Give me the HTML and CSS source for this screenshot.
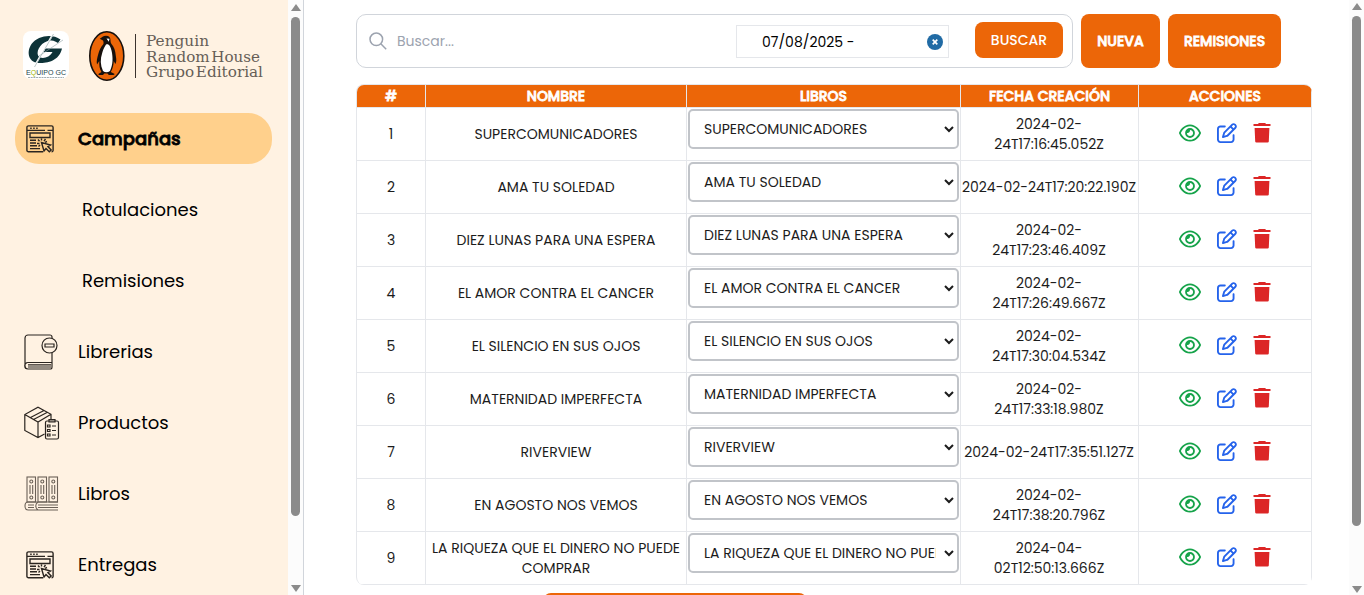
FILE: index.html
```html
<!DOCTYPE html>
<html lang="es">
<head>
<meta charset="utf-8">
<title>Campañas</title>
<link rel="stylesheet" href="styles.css">
</head>
<body>
<svg class="defs" aria-hidden="true">
  <symbol id="eye" viewBox="0 0 576 512"><path fill="currentColor" d="M288 80c-65.2 0-118.8 29.6-159.9 67.7C89.6 183.5 63 226 49.4 256c13.6 30 40.2 72.5 78.6 108.3C169.2 402.4 222.8 432 288 432s118.8-29.6 159.9-67.7C486.4 328.5 513 286 526.6 256c-13.6-30-40.2-72.5-78.6-108.3C406.8 109.6 353.2 80 288 80zM95.4 112.6C142.5 68.8 207.2 32 288 32s145.5 36.8 192.6 80.6c46.8 43.5 78.1 95.4 93 131.1c3.3 7.9 3.3 16.7 0 24.6c-14.9 35.7-46.2 87.7-93 131.1C433.5 443.2 368.8 480 288 480s-145.5-36.8-192.6-80.6C48.6 356 17.3 304 2.5 268.3c-3.3-7.9-3.3-16.7 0-24.6C17.3 208 48.6 156 95.4 112.6zM288 336c44.2 0 80-35.8 80-80s-35.8-80-80-80c-.7 0-1.3 0-2 0c1.3 5.1 2 10.5 2 16c0 35.3-28.7 64-64 64c-5.5 0-10.9-.7-16-2c0 .7 0 1.3 0 2c0 44.2 35.8 80 80 80zm0-208a128 128 0 1 1 0 256 128 128 0 1 1 0-256z"/></symbol>
  <symbol id="edit" viewBox="0 0 512 512"><path fill="currentColor" d="M441 58.9L453.1 71c9.4 9.4 9.4 24.6 0 33.9L424 134.1 377.9 88 407 58.9c9.4-9.4 24.6-9.4 33.9 0zM209.8 256.2L344 121.9 390.1 168 255.8 302.2c-2.9 2.9-6.5 5-10.4 6.1l-58.5 16.7 16.7-58.5c1.1-3.9 3.2-7.5 6.1-10.4zM373.1 25L175.8 222.2c-8.7 8.7-15 19.4-18.3 31.1l-28.6 100c-2.4 8.4-.1 17.4 6.1 23.6s15.2 8.5 23.6 6.1l100-28.6c11.8-3.4 22.5-9.7 31.1-18.3L487 138.9c28.1-28.1 28.1-73.7 0-101.8L474.9 25C446.8-3.1 401.2-3.1 373.1 25zM88 64C39.4 64 0 103.4 0 152V424c0 48.6 39.4 88 88 88H360c48.6 0 88-39.4 88-88V312c0-13.3-10.7-24-24-24s-24 10.7-24 24V424c0 22.1-17.9 40-40 40H88c-22.1 0-40-17.9-40-40V152c0-22.1 17.9-40 40-40H200c13.3 0 24-10.7 24-24s-10.7-24-24-24H88z"/></symbol>
  <symbol id="trash" viewBox="0 0 18 20"><path fill="currentColor" d="M5.8 0h6.400l.8 1H17.500v2H.5V1H5zM1.600 5h14.800l-.6 13.400a1.200 1.200 0 0 1-1.200 1.100H3.400a1.200 1.200 0 0 1-1.200-1.100z"/></symbol>
  <symbol id="campaign" viewBox="0 0 28 28"><g fill="none" stroke="currentColor" stroke-width="1.4"><path d="M17 26.800H2.500a1.600 1.600 0 0 1-1.600-1.600V2.500A1.600 1.600 0 0 1 2.500.9h23a1.600 1.600 0 0 1 1.600 1.600v23a1.500 1.500 0 0 1-1.500 1.300M1 5.400h18M21.500 5.400H27M4.200 3.200h1.500M7.200 3.200h1.500M10.200 3.200h1.500M4 8h20v4.500H4zM4 15.300h6M4 18h6M4 20.700h7M4 23.600h10M15.500 13.500v2M12 14.500l1.500 1.700M19.500 14l-1.500 2.200M11 18.500h2.500M21 16.500l-2 .8M12.500 21.500l1.500-1.500"/><path d="m15.500 17.500 2.500 8.500 2-2.500 3.300 3.300 1.900-1.900-3.300-3.300 2.600-1.600z"/></g></symbol>
</svg>
<div class="app">
  <aside class="sidebar">
    <div class="brand">
      <svg class="gc" viewBox="0 0 46 48">
        <rect width="46" height="48" rx="8" fill="#fff"/>
        <path d="M37.500 8.500C29 2.500 15 4.500 8.500 13c-6 9-2 19 7.500 19 9 0 20-2 23-14.500H22.500l-2 3.500h9c-3 6-12 8-14.500 3.500-2-6 4-14 12-15 4-.5 6 1.500 8 2.500z" fill="#0d3338"/>
        <path d="M30 3 11 36" stroke="#fff" stroke-width="1.600"/>
        <path d="M30.500 3 11.500 36M40 9 16 25" stroke="#8fa3a4" stroke-width=".6"/>
        <text x="3" y="44" textLength="40" lengthAdjust="spacingAndGlyphs" class="gc-name">E<tspan fill="#a3b800">Q</tspan>UIPO GC</text>
        <path d="M5 46.500h36" stroke="#89979a" stroke-width=".8" stroke-dasharray="2 .7"/>
      </svg>
      <svg class="penguin" viewBox="0 0 180 52">
        <ellipse cx="17.800" cy="26" rx="17" ry="24.200" fill="#ec6608" stroke="#17100d" stroke-width="1.600"/>
        <path d="M10.800 8.800C13 7.500 14 5.800 17 5.800c3 0 4.700 2 4.500 4.700-.1 2.500 1.200 3.700 2.500 5.500 2.500 4 2.500 8 3.200 12.500.3 2.500-.1 4.500-.9 5.500-.6-1-.9-2-1.500-3-.3 4.500-1.200 8-3 11l3.500 1.800c.5.600 0 1.200-1 1.200h-4.500l-1.300-1.600h-3.200L14 45h-3.500c-1-.1-1.400-.8-.8-1.300l2.800-1.700c-2-3-2.500-7-2.200-11L8 34.500c-.8-3 .3-7 1.300-10.500 1-4 2.500-7 4.800-9.500.7-1 .6-2.500-.1-4z" fill="#17100d"/>
        <path d="M17 14.500c3-1 4.500 2 5.500 6 1.600 7 1.500 14-1.500 20.500-2.500 1.700-5 1.500-7 0-2.800-6-2.800-12-.8-18 .8-3 1.500-5 3.800-8.500zM17.500 8.500l3 .2-.7 3z" fill="#fff"/>
        <path d="M46.500 4v44" stroke="#3b332e" stroke-width="1"/>
        <g class="publisher">
          <text x="57" y="15.700" textLength="63" lengthAdjust="spacingAndGlyphs">Penguin</text>
          <text x="57" y="31.500" textLength="114" lengthAdjust="spacingAndGlyphs">Random House</text>
          <text x="57" y="47.300" textLength="117" lengthAdjust="spacingAndGlyphs">Grupo Editorial</text>
        </g>
      </svg>
    </div>
    <nav class="menu">
      <a class="item active"><svg class="ico"><use href="#campaign"/></svg><span>Campañas</span></a>
      <a class="item sub"><span>Rotulaciones</span></a>
      <a class="item sub"><span>Remisiones</span></a>
      <a class="item"><svg class="ico wide" viewBox="0 0 36 36"><g fill="none" stroke="#2b2520" stroke-width="1.200"><path d="M28 4V3a2 2 0 0 0-2-2H4a3 3 0 0 0-3 3v28a3 3 0 0 0 3 3h23.500M28 19v9.500H4A3 3 0 0 0 4 35M28 29v4a2 2 0 0 1-1 2M4 30.800h23M4 33h23"/><circle cx="25.500" cy="11.500" r="7.500"/><path d="M21 10h9v3h-9z"/></g></svg><span>Librerias</span></a>
      <a class="item"><svg class="ico wide" viewBox="0 0 36 36"><g fill="none" stroke="#2b2520" stroke-width="1.200"><path d="M20.500 29 14 32.500.8 25.500V9.500L14 2.300l13 7V14M.8 9.500 14 17l13-7.700M14 17v15.500M6.500 12.500 20 5.500M9.500 14.500l13.500-7"/><rect x="21.500" y="16" width="13" height="18" rx="1.500"/><path d="M25 14.500h6v2.500h-6zM23.500 20h2.500v2h-2.500zM23.500 24.500h2.500v2h-2.500zM23.500 29h2.500v2h-2.500zM28 21h4M28 25.500h4M28 30h4"/></g></svg><span>Productos</span></a>
      <a class="item"><svg class="ico wide" viewBox="0 0 36 36"><g fill="none" stroke="#6b6157" stroke-width="1.100"><rect x="3" y="1" width="8.500" height="25"/><rect x="14" y="1" width="8.500" height="25"/><rect x="25" y="1" width="8.500" height="25"/><circle cx="7.300" cy="5.500" r="1.500"/><circle cx="18.300" cy="5.500" r="1.500"/><circle cx="29.300" cy="5.500" r="1.500"/><circle cx="7.300" cy="21.500" r="1.500"/><circle cx="18.300" cy="21.500" r="1.500"/><circle cx="29.300" cy="21.500" r="1.500"/><path d="M6 9v9M8.700 9v9M17 9v9M19.700 9v9M28 9v9M30.700 9v9M34 26H4c-4 0-4 8 0 8h30M14 26c-3 2-3 6 0 8M4 29h6M4 31.500h6M14 29h20M14 31.500h20"/></g></svg><span>Libros</span></a>
      <a class="item"><svg class="ico"><use href="#campaign"/></svg><span>Entregas</span></a>
    </nav>
  </aside>
  <div class="scroll side-scroll"><i class="up"></i><i class="thumb"></i><i class="down"></i></div>
  <main class="main">
    <div class="toolbar">
      <div class="search">
        <svg class="lens" viewBox="0 0 18 18"><g fill="none" stroke="#9ca3af" stroke-width="1.500"><circle cx="7.300" cy="7.300" r="6.300"/><path d="m11.800 11.800 5.400 5.400"/></g></svg>
        <span class="placeholder">Buscar...</span>
        <div class="date"><span>07/08/2025 -</span><svg viewBox="0 0 16 16"><circle cx="8" cy="8" r="8" fill="#216ba5"/><path d="m5.700 5.700 4.600 4.600m0-4.600-4.600 4.600" stroke="#fff" stroke-width="1.700"/></svg></div>
        <button class="btn small">BUSCAR</button>
      </div>
      <button class="btn nueva">NUEVA</button>
      <button class="btn remisiones">REMISIONES</button>
    </div>
    <table class="grid">
      <colgroup><col class="c1"><col class="c2"><col class="c3"><col class="c4"><col class="c5"></colgroup>
      <thead><tr><th>#</th><th>NOMBRE</th><th>LIBROS</th><th>FECHA CREACIÓN</th><th>ACCIONES</th></tr></thead>
      <tbody>
        <tr><td>1</td><td>SUPERCOMUNICADORES</td><td class="pick"><select><option>SUPERCOMUNICADORES</option></select></td><td class="when">2024-02-<br>24T17:16:45.052Z</td><td><div class="acts"><svg class="eye"><use href="#eye"/></svg><svg class="edit"><use href="#edit"/></svg><svg class="trash"><use href="#trash"/></svg></div></td></tr>
        <tr><td>2</td><td>AMA TU SOLEDAD</td><td class="pick"><select><option>AMA TU SOLEDAD</option></select></td><td class="when">2024-02-24T17:20:22.190Z</td><td><div class="acts"><svg class="eye"><use href="#eye"/></svg><svg class="edit"><use href="#edit"/></svg><svg class="trash"><use href="#trash"/></svg></div></td></tr>
        <tr><td>3</td><td>DIEZ LUNAS PARA UNA ESPERA</td><td class="pick"><select><option>DIEZ LUNAS PARA UNA ESPERA</option></select></td><td class="when">2024-02-<br>24T17:23:46.409Z</td><td><div class="acts"><svg class="eye"><use href="#eye"/></svg><svg class="edit"><use href="#edit"/></svg><svg class="trash"><use href="#trash"/></svg></div></td></tr>
        <tr><td>4</td><td>EL AMOR CONTRA EL CANCER</td><td class="pick"><select><option>EL AMOR CONTRA EL CANCER</option></select></td><td class="when">2024-02-<br>24T17:26:49.667Z</td><td><div class="acts"><svg class="eye"><use href="#eye"/></svg><svg class="edit"><use href="#edit"/></svg><svg class="trash"><use href="#trash"/></svg></div></td></tr>
        <tr><td>5</td><td>EL SILENCIO EN SUS OJOS</td><td class="pick"><select><option>EL SILENCIO EN SUS OJOS</option></select></td><td class="when">2024-02-<br>24T17:30:04.534Z</td><td><div class="acts"><svg class="eye"><use href="#eye"/></svg><svg class="edit"><use href="#edit"/></svg><svg class="trash"><use href="#trash"/></svg></div></td></tr>
        <tr><td>6</td><td>MATERNIDAD IMPERFECTA</td><td class="pick"><select><option>MATERNIDAD IMPERFECTA</option></select></td><td class="when">2024-02-<br>24T17:33:18.980Z</td><td><div class="acts"><svg class="eye"><use href="#eye"/></svg><svg class="edit"><use href="#edit"/></svg><svg class="trash"><use href="#trash"/></svg></div></td></tr>
        <tr><td>7</td><td>RIVERVIEW</td><td class="pick"><select><option>RIVERVIEW</option></select></td><td class="when">2024-02-24T17:35:51.127Z</td><td><div class="acts"><svg class="eye"><use href="#eye"/></svg><svg class="edit"><use href="#edit"/></svg><svg class="trash"><use href="#trash"/></svg></div></td></tr>
        <tr><td>8</td><td>EN AGOSTO NOS VEMOS</td><td class="pick"><select><option>EN AGOSTO NOS VEMOS</option></select></td><td class="when">2024-02-<br>24T17:38:20.796Z</td><td><div class="acts"><svg class="eye"><use href="#eye"/></svg><svg class="edit"><use href="#edit"/></svg><svg class="trash"><use href="#trash"/></svg></div></td></tr>
        <tr><td>9</td><td>LA RIQUEZA QUE EL DINERO NO PUEDE<br>COMPRAR</td><td class="pick"><select><option>LA RIQUEZA QUE EL DINERO NO PUEDE COMPRAR</option></select></td><td class="when">2024-04-<br>02T12:50:13.666Z</td><td><div class="acts"><svg class="eye"><use href="#eye"/></svg><svg class="edit"><use href="#edit"/></svg><svg class="trash"><use href="#trash"/></svg></div></td></tr>
      </tbody>
    </table>
    <div class="pager"></div>
  </main>
  <div class="scroll main-scroll"><i class="up"></i><i class="thumb"></i><i class="down"></i></div>
</div>
</body>
</html>
```
FILE: styles.css
```css
* { box-sizing: border-box; }
body { margin: 0; overflow: hidden; background: #fff; color: #000; font-family: Poppins, Inter, "Liberation Sans", sans-serif; }
.defs { display: none; }
.app { display: flex; height: 595px; overflow: hidden; }

.sidebar { width: 288px; flex: none; background: #fff2e2; padding: 30px 16px 0 15px; overflow: hidden; }
.brand { display: flex; height: 83px; padding-left: 8px; align-items: flex-start; }
.gc { width: 46px; height: 48px; flex: none; margin: 1px 20px 0 0; }
.gc-name { font: 7px "Liberation Sans", sans-serif; fill: #24464a; }
.penguin { width: 180px; height: 52px; flex: none; overflow: visible; }
.publisher { font: 14.5px "DejaVu Serif", serif; fill: #665e57; word-spacing: -3px; }
.menu { display: flex; flex-direction: column; gap: 20px; }
.item { display: flex; align-items: center; height: 51px; flex: none; padding-left: 11px; border-radius: 24px; font-size: 18px; }
.item.active { background: #ffd08c; font-weight: 500; -webkit-text-stroke: .8px #000; }
.item span { white-space: nowrap; }
.ico { width: 28px; height: 28px; flex: none; margin: 0 24px 0 0; color: #2b2520; }
.ico.wide { width: 36px; height: 36px; margin: 0 18px 0 -2px; }
.item.sub { padding-left: 67px; }

.scroll { width: 15px; flex: none; display: flex; flex-direction: column; align-items: center; background: #fcfcfc; }
.scroll i { flex: none; }
.up { border: 5px solid transparent; border-top: 0; border-bottom: 7px solid #8b8b8b; margin-top: 4px; }
.down { border: 5px solid transparent; border-bottom: 0; border-top: 7px solid #8b8b8b; margin: auto 0 3px; }
.thumb { width: 9px; border-radius: 5px; background: #8b8b8b; }
.side-scroll .thumb { height: 499px; margin-top: 6px; }
.main-scroll .up { margin-top: 3px; }
.main-scroll .down { margin-bottom: 2px; }
.main-scroll .thumb { height: 510px; margin-top: 6px; }

.main { flex: 1; min-width: 0; border-left: 1px solid #d1d5db; padding: 14px 0 0 52px; }
.toolbar { display: flex; gap: 8px; height: 54px; }
.search { width: 717px; border: 1px solid #d1d5db; border-radius: 10px; display: flex; align-items: center; padding: 0 9px 0 12px; }
.lens { width: 18px; height: 18px; flex: none; margin-right: 10px; }
.placeholder { flex: 1; font-size: 14px; color: #9ca3af; }
.date { width: 213px; height: 33px; margin-right: 26px; border: 1px solid #e5e7eb; display: flex; align-items: center; justify-content: space-between; padding: 2px 5px 0 25px; font-size: 14px; }
.date svg { width: 16px; height: 16px; }
.btn { border: 0; padding: 0; border-radius: 8px; background: #ec6608; color: #fff; font: 500 14px Poppins, Inter, sans-serif; -webkit-text-stroke: .8px #fff; }
.btn.small { width: 88px; height: 36px; margin-bottom: 2px; -webkit-text-stroke: 0; }
.nueva { width: 79px; }
.remisiones { width: 113px; }

.grid { width: 956px; margin-top: 16px; table-layout: fixed; border-collapse: separate; border-spacing: 0; border: 1px solid #e5e7eb; border-width: 1px 0 0 1px; border-radius: 8px; overflow: hidden; font-size: 14px; line-height: 20px; text-align: center; color: #1c1c1c; }
.c1 { width: 69px; } .c2 { width: 261px; } .c3 { width: 274px; } .c4 { width: 178px; } .c5 { width: 173px; }
.grid th, .grid td { padding: 0; border: 1px solid #e5e7eb; border-width: 0 1px 1px 0; white-space: nowrap; }
.grid th { height: 23px; background: #ec6608; color: #fff; font-weight: 500; -webkit-text-stroke: .8px #fff; }
.grid td { height: 53px; }
.grid .when { padding-right: 1px; }
.grid .pick { vertical-align: top; padding: 1px 1px 0; }
.pick select { display: block; width: 271px; height: 40px; border: 2px solid #c1c4c9; border-radius: 5px; background: #fff; padding: 7px 5px 9px 10px; font: 14px/20px Poppins, Inter, sans-serif; color: #1c1c1c; }
.acts { display: flex; justify-content: center; align-items: center; gap: 16px; padding-bottom: 2px; }
.acts svg { height: 20px; }
.eye { width: 22px; color: #16a34a; }
.edit { width: 20px; color: #2563eb; }
.trash { width: 18px; color: #dc2626; }
.pager { width: 264px; height: 36px; margin: 8px 0 0 187px; border-radius: 8px; background: #ec6608; }
```
